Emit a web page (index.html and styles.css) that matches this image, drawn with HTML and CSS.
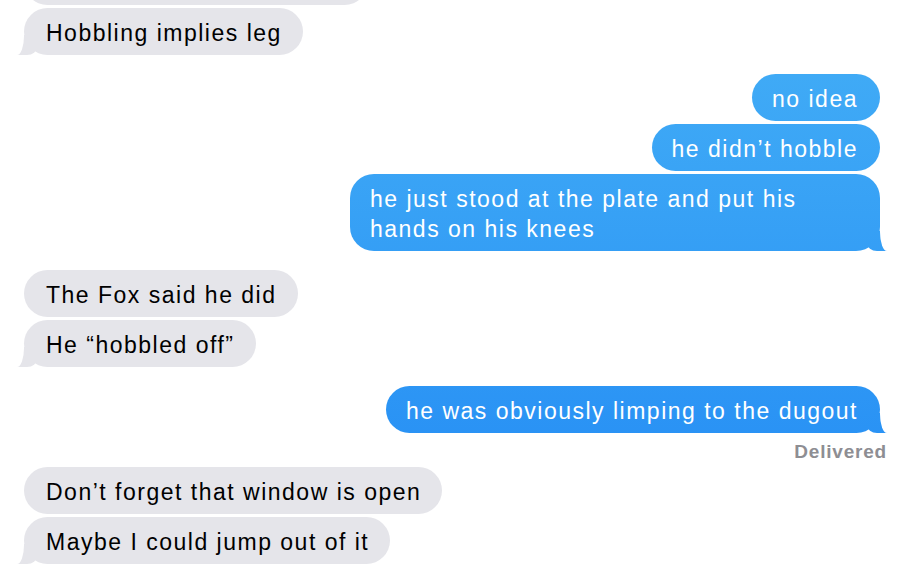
FILE: index.html
```html
<!DOCTYPE html>
<html lang="en">
<head>
    <meta charset="UTF-8">
    <meta name="viewport" content="width=device-width, initial-scale=1.0">
    <title>Messages</title>
    <link rel="stylesheet" href="styles.css">
</head>
<body>
    <div class="thread">
        <div class="msg recv stub"></div>
        <div class="msg recv tail">Hobbling implies leg</div>

        <div class="msg sent group">no idea</div>
        <div class="msg sent">he didn’t hobble</div>
        <div class="msg sent tail">he just stood at the plate and put his hands on his knees</div>

        <div class="msg recv group">The Fox said he did</div>
        <div class="msg recv tail">He “hobbled off”</div>

        <div class="msg sent group tail">he was obviously limping to the dugout</div>
        <div class="status">Delivered</div>

        <div class="msg recv">Don’t forget that window is open</div>
        <div class="msg recv tail">Maybe I could jump out of it</div>
    </div>
</body>
</html>
```

FILE: styles.css
```css
body {
    margin: 0;
    background: #ffffff;
    font-family: "Liberation Sans", Arial, sans-serif;
    overflow: hidden;
}
.thread {
    display: flex;
    flex-direction: column;
    padding: 0 26px 0 24px;
}
.msg {
    position: relative;
    max-width: 488px;
    padding: 10px 21px 7px 22px;
    border-radius: 24px;
    font-size: 23px;
    line-height: 30px;
    letter-spacing: 1.5px;
    margin-top: 3px;
}
.msg.group {
    margin-top: 19px;
}
/* bottom of the message cut off by the top of the screen */
.stub {
    box-sizing: border-box;
    width: 344px;
    height: 47px;
    margin-top: -42px;
}
.recv {
    align-self: flex-start;
    background: #e5e5ea;
    color: #000000;
}
.sent {
    align-self: flex-end;
    background: linear-gradient(to bottom, #44aff6, #2189f4) fixed;
    color: #ffffff;
    padding: 10px 22px 7px 20px;
}

/* bubble tails */
.tail::before,
.tail::after {
    content: "";
    position: absolute;
    bottom: 0;
    height: 20px;
}
.recv.tail::before {
    left: -7px;
    width: 20px;
    background: inherit;
    border-bottom-right-radius: 10px 8px;
}
.recv.tail::after {
    left: -14px;
    width: 14px;
    background: #ffffff;
    border-bottom-right-radius: 7px 19px;
}
.sent.tail::before {
    right: -7px;
    width: 20px;
    background: inherit;
    border-bottom-left-radius: 10px 8px;
}
.sent.tail::after {
    right: -14px;
    width: 14px;
    background: #ffffff;
    border-bottom-left-radius: 7px 19px;
}

.status {
    align-self: flex-end;
    margin: 8px -7px 1px 0;
    font-size: 19px;
    line-height: 22px;
    font-weight: bold;
    letter-spacing: 0.8px;
    color: #8e8e93;
}
```
